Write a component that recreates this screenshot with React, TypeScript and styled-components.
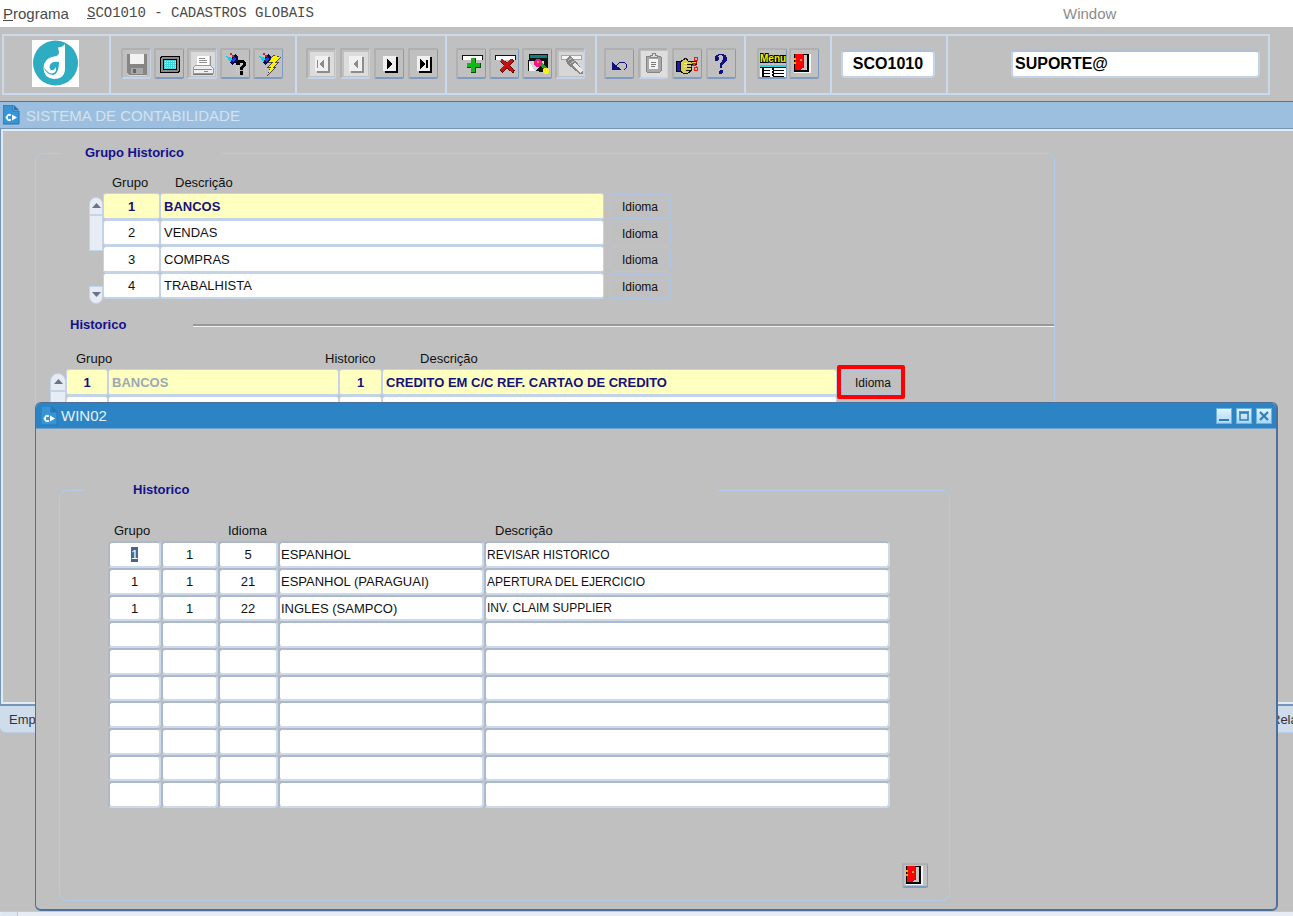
import React, { useEffect, useRef } from 'react';
import styled, { createGlobalStyle, css } from 'styled-components';

const GlobalStyle = createGlobalStyle`
  *, *::before, *::after { box-sizing: border-box; }
  body {
    margin: 0;
    background: #c0c0c0;
    color: #111;
    font-family: "Liberation Sans", Arial, sans-serif;
    font-size: 13px;
  }
  button, input { font: inherit; color: inherit; }
  ::selection { background: #4a6490; color: #fff; }
`;

const Screen = styled.div`
  position: relative;
  display: flex;
  flex-direction: column;
  height: 100vh;
  overflow: hidden;
`;

/* ---------- menu bar ---------- */

const MenuBar = styled.nav`
  display: grid;
  grid-template-columns: 84px 1fr 230px;
  align-items: center;
  flex: none;
  height: 27px;
  padding: 0 0 1px 3px;
  background: #fff;
  color: #4a4a4a;
`;

const MenuItem = styled.button<{ $mono?: boolean; $dim?: boolean }>`
  padding: 0;
  border: 0;
  background: none;
  text-align: left;
  font-size: 15px;
  ${(p) => p.$mono && css`font-family: "Liberation Mono", monospace; font-size: 14px;`}
  ${(p) => p.$dim && css`color: #8c8c8c;`}
`;

/* ---------- toolbar ---------- */

const Toolbar = styled.header`
  flex: none;
  padding: 7px 23px 6px 2px;
`;

const ToolbarFrame = styled.div`
  display: grid;
  grid-template-columns: 107px 186px 150px 150px 149px 86px 116px 1fr;
  height: 61px;
  border: 2px solid #cbd9ec;
`;

const ToolGroup = styled.div<{ $start: number; $gap?: number }>`
  display: flex;
  align-items: center;
  gap: ${(p) => p.$gap ?? 4}px;
  padding: 0 8px 2px ${(p) => p.$start}px;
  border-right: 2px solid #cbd9ec;
  &:last-child { border-right: 0; }
`;

const ToolButton = styled.button<{ $small?: boolean }>`
  display: flex;
  align-items: center;
  justify-content: center;
  flex: none;
  width: ${(p) => (p.$small ? 26 : 30)}px;
  height: ${(p) => (p.$small ? 25 : 31)}px;
  padding: 0;
  overflow: hidden;
  border: 2px solid;
  border-color: #b0b0b0 #7f9cc0 #7f9cc0 #b0b0b0;
  border-width: 2px 1px 2px 2px;
  border-radius: 2px;
  background: #c0c0c0;
  &:disabled { border-color: #b0b0b0 #c3d3e8 #c3d3e8 #b0b0b0; }
`;

const ToolField = styled.input<{ $fill?: boolean }>`
  width: ${(p) => (p.$fill ? '100%' : '94px')};
  height: 28px;
  padding: 0 2px;
  border: 2px solid #c3d3e8;
  border-top-color: #aebfd6;
  border-radius: 4px;
  background: #fff;
  color: #000;
  font-size: 16px;
  font-weight: bold;
  text-align: ${(p) => (p.$fill ? 'left' : 'center')};
`;

/* ---------- main window ---------- */

const Workspace = styled.main`
  display: flex;
  flex: 1;
  flex-direction: column;
  min-height: 0;
  padding-bottom: 178px;
`;

const TitleBar = styled.div<{ $active?: boolean }>`
  display: flex;
  align-items: center;
  flex: none;
  gap: 6px;
  height: 28px;
  padding-left: 3px;
  border-top: 1px solid #54759a;
  border-bottom: 1px solid #7396b9;
  background: #9dbfdf;
  color: #d3e2f1;
  font-size: 15px;
  ${(p) => p.$active && css`
    gap: 3px;
    height: 26px;
    padding: 0 4px 0 5px;
    border-top: 0;
    border-bottom-color: #6fa3cc;
    border-radius: 5px 5px 0 0;
    background: #2d84c4;
    color: #e6f2fb;
  `}
`;

const TitleText = styled.h1`
  flex: 1;
  margin: 0;
  font-size: 15px;
  font-weight: normal;
`;

const WindowBody = styled.section`
  flex: 1;
  min-height: 0;
  overflow: hidden;
  padding: 16px 31px 0;
  border-bottom: 2px solid #7396b9;
  border-left: 1px solid #7396b9;
  box-shadow: inset 2px 2px 0 #e3eaf2, inset 0 -2px 0 #e3eaf2;
`;

const TabStrip = styled.div`
  display: flex;
  flex: none;
  justify-content: space-between;
  height: 27px;
  border-bottom: 1px solid #bccce2;
  border-radius: 0 0 0 6px;
  background: #cfdcec;
`;

const Tab = styled.button<{ $clipped?: boolean }>`
  width: ${(p) => (p.$clipped ? 22 : 60)}px;
  padding: 0 0 0 ${(p) => (p.$clipped ? 0 : 9)}px;
  overflow: hidden;
  border: 0;
  background: none;
  color: #333;
  text-align: left;
`;

/* ---------- forms ---------- */

const Group = styled.fieldset<{ $width: number; $top: number }>`
  width: 100%;
  max-width: ${(p) => p.$width}px;
  height: 100%;
  min-width: 0;
  margin: 0 0 0 3px;
  padding: ${(p) => p.$top}px 0 0;
  border: 1px solid #b3caea;
  border-radius: 8px;
`;

const GroupTitle = styled.legend<{ $width: number; $indent: number }>`
  width: ${(p) => p.$width}px;
  height: 16px;
  margin-left: 24px;
  padding: 0 0 0 ${(p) => p.$indent}px;
  color: #14108c;
  font-weight: bold;
  line-height: 16px;
`;

const SectionTitle = styled.h2`
  display: flex;
  align-items: center;
  margin: 13px 0 17px 34px;
  color: #14108c;
  font-size: 13px;
  line-height: 16px;
  span { width: 123px; }
  &::after {
    content: "";
    flex: 1;
    height: 3px;
    border-top: 2px solid #999;
    border-bottom: 1px solid #f2f2f2;
  }
`;

const GridArea = styled.div<{ $start: number }>`
  display: flex;
  align-items: flex-start;
  padding-left: ${(p) => p.$start}px;
`;

const Grid = styled.table<{ $width: number }>`
  width: ${(p) => p.$width}px;
  border-collapse: separate;
  border-spacing: 0;
  table-layout: fixed;
  td { padding: 0; vertical-align: top; }
`;

const Head = styled.th<{ $left?: number }>`
  height: 19px;
  padding: 0 0 0 ${(p) => p.$left ?? 0}px;
  font-weight: normal;
  line-height: 18px;
  text-align: left;
  vertical-align: top;
  white-space: nowrap;
`;

const Cell = styled.input<{ $center?: boolean; $current?: boolean; $dim?: boolean }>`
  display: block;
  width: 100%;
  height: 26px;
  padding: 0 3px;
  border: 1px solid #c3d3e8;
  border-width: 1px 1px 2px;
  border-radius: 3px;
  outline: 0;
  background: #fff;
  ${(p) => p.$center && css`text-align: center;`}
  ${(p) => p.$current && css`background: #ffffc0; color: #14107c; font-weight: bold;`}
  ${(p) => p.$dim && css`color: #9aa9b4;`}
  tr:nth-child(odd) & { height: 27px; }
`;

const SunkenCell = styled.input<{ $center?: boolean; $compact?: boolean }>`
  display: block;
  width: 100%;
  height: 27px;
  padding: 0 1px;
  border: 2px solid;
  border-color: #adb8c9 #ccdaec #ccdaec #adb8c9;
  border-radius: 4px;
  outline: 0;
  background: #fff;
  font-size: ${(p) => (p.$compact ? 12 : 13)}px;
  text-align: ${(p) => (p.$center ? 'center' : 'left')};
  tr:nth-child(3n) & { height: 26px; }
`;

const IdiomaButton = styled.button`
  display: block;
  width: 62px;
  height: 25px;
  margin: 1px 0 0 5px;
  padding: 0;
  border: 1px solid #b0c6e6;
  border-radius: 3px;
  background: #c0c0c0;
  color: #111;
  font-size: 12px;
`;

const MarkedCell = styled.td`
  position: relative;
  &::after {
    content: "";
    position: absolute;
    top: -4px;
    left: 0;
    width: 68px;
    height: 34px;
    border: 4px solid #f00;
    border-radius: 2px;
    pointer-events: none;
  }
`;

/* ---------- scroll bars ---------- */

const ScrollTrack = styled.div<{ $width: number }>`
  display: flex;
  flex: none;
  flex-direction: column;
  width: ${(p) => p.$width}px;
  height: 107px;
  margin-top: 23px;
`;

const ScrollArrow = styled.button<{ $down?: boolean }>`
  display: flex;
  align-items: center;
  justify-content: center;
  height: 18px;
  margin-top: ${(p) => (p.$down ? 'auto' : '0')};
  padding: 0;
  border: 1px solid #c3d3e8;
  border-radius: ${(p) => (p.$down ? '0 0 8px 8px' : '8px 8px 0 0')};
  background: #e6ebf4;
`;

const ScrollThumb = styled.div`
  height: 36px;
  border: 1px solid #c3d3e8;
  background: #e8edf5;
`;

/* ---------- dialog ---------- */

const Dialog = styled.section`
  position: absolute;
  top: 402px;
  right: 15px;
  bottom: 5px;
  left: 35px;
  display: flex;
  flex-direction: column;
  border: 1px solid #4f6f9b;
  border-right-width: 2px;
  border-bottom-width: 2px;
  border-radius: 6px;
  background: #c0c0c0;
`;

const DialogBody = styled.div`
  flex: 1;
  padding: 53px 20px 8px;
`;

const DialogFoot = styled.div`
  display: flex;
  justify-content: flex-end;
  padding: 55px 21px 0 0;
`;

const WindowButton = styled.button`
  display: flex;
  width: 16px;
  height: 16px;
  margin-left: 1px;
  padding: 0;
  border: 1px solid #6db2e0;
  background: linear-gradient(#e2f3fd, #aed7f2);
`;

const BottomBar = styled.footer`
  display: flex;
  flex: none;
  height: 5px;
  border-top: 1px solid #b9cbe3;
  background: #e8edf5;
`;

const BottomArrow = styled.button`
  width: 18px;
  padding: 0;
  border: 0;
  border-right: 1px solid #b9cbe3;
  border-radius: 5px 0 0 0;
  background: #dfe7f2;
`;

/* ---------- drawings ---------- */

const Icon = ({ children, size = 26 }: { children: React.ReactNode; size?: number }) => (
  <svg width={size} height={size} viewBox={`0 0 ${size} ${size}`} shapeRendering="crispEdges" aria-hidden="true">
    {children}
  </svg>
);

const Logo = () => (
  <svg width="47" height="47" viewBox="0 0 47 47" role="img" aria-label="Logo">
    <rect width="47" height="47" fill="#fff" />
    <circle cx="23.5" cy="23" r="22.5" fill="#2eacc1" />
    <path d="M26 7.500Q31 7 33 4V28Q33 39 22 39Q11.500 38 11.500 28Q12 18 22 16.500Q27 16 27 12Z" fill="#fff" />
    <path d="M11.500 27Q14 34 21 35Q27 34 27 22Q18 21 17.500 27Q18 31 21.500 30Q23.500 29 23 27Q25.500 30 22.500 32.500Q18 35 14.500 30.500Z" fill="#2eacc1" />
  </svg>
);

const FormIcon = () => (
  <svg width="17" height="20" viewBox="0 0 17 20" aria-hidden="true">
    <path d="M0 0H10V6H16V19H0Z" fill="#3795d6" stroke="#2277b5" />
    <path d="M11 0L16 5H11Z" fill="#2277b5" />
    <path d="M9 9.500L14 12.500L9 15.500Z" fill="#fff" />
    <path d="M7 9.500Q4 9.500 4 12.500Q4 15.500 7 15.500M2.500 12.500H4M7 9V11M7 14V16" fill="none" stroke="#fff" strokeWidth="1.600" />
  </svg>
);

const Torch = () => (
  <g>
    <path d="M3 5L9 7L12 3L15 6L15 10L9 14Z" fill="#0b0b4a" />
    <path d="M3 5L9 7L8 12Z" fill="#00d8f0" />
    <path d="M9 8L12 5L13 9L10 11Z" fill="#1b3ff0" />
    <path d="M7 2H9V4H7ZM9 4H11V6H9Z" fill="#d02030" />
  </g>
);

const SaveIcon = () => (
  <Icon>
    <path d="M3 3H23V24H5L3 22Z" fill="#858585" />
    <rect x="6" y="3" width="14" height="10" fill="#f2f2f2" />
    <rect x="7" y="17" width="12" height="6" fill="#a8a8a8" />
    <rect x="9" y="18" width="3" height="4" fill="#666" />
    <path d="M5 24H23V25H5Z" fill="#d8d8d8" />
  </Icon>
);

const ScreenIcon = () => (
  <Icon>
    <rect x="3" y="5" width="20" height="17" rx="2" fill="#000" />
    <rect x="4" y="6" width="18" height="15" rx="2" fill="#8a8a8a" />
    <rect x="6" y="8" width="14" height="11" fill="#000" />
    <rect x="7" y="9" width="12" height="9" fill="#3fd6dc" />
    <path d="M8 10H19M8 12H19M8 14H19M8 16H19" stroke="#b9f4f4" strokeDasharray="1 1" />
  </Icon>
);

const PrintIcon = () => (
  <Icon>
    <rect x="1" y="1" width="24" height="24" fill="#dadada" />
    <path d="M7 5H19V14H7Z" fill="#fff" />
    <path d="M9 7H15M9 9H17M9 11H17M7 14H20V5" stroke="#909090" fill="none" />
    <path d="M3 17L6 14H20L23 17V22H3Z" fill="#efefef" stroke="#999" />
    <path d="M4 18H22M14 20H18" stroke="#8a8a8a" strokeWidth="1" />
    <path d="M3 23H23" stroke="#777" />
  </Icon>
);

const TorchQueryIcon = () => (
  <Icon>
    <path d="M13 12H25M13 14H25M13 16H25M13 18H25M13 20H25M13 22H25" stroke="#f0e820" strokeDasharray="1 1" />
    <Torch />
    <path d="M13 14V11L15 9H20L23 11V15L20 17V19H17V16L20 13V12H17V14Z" fill="#000" />
    <rect x="17" y="20" width="3" height="4" fill="#000" />
  </Icon>
);

const TorchRunIcon = () => (
  <Icon>
    <Torch />
    <path d="M17 4L25 6L20 11H24L18 16H20L11 25L14 17H11L15 12H12Z" fill="#444" />
    <path d="M17 5L24 6L18 12H22L16 17H18L12 23L15 16H12L17 11H13Z" fill="#fff200" />
  </Icon>
);

const NavIcon = ({ kind, dim }: { kind: 'first' | 'prev' | 'next' | 'last'; dim?: boolean }) => {
  const ink = dim ? '#8c8c8c' : '#000';
  return (
    <Icon>
      {dim && <rect x="1" y="1" width="24" height="24" fill="#dcdcdc" />}
      <path d="M8 21H20V6" stroke={ink} strokeWidth="2" fill="none" />
      <rect x="6" y="5" width="13" height="15" fill="#f0f0f0" />
      {kind === 'first' && <path d="M8 9H9V17H8ZM15 8V18L10 13Z" fill={ink} />}
      {kind === 'prev' && <path d="M15 8V18L10 13Z" fill={ink} />}
      {kind === 'next' && <path d="M10 8V18L16 13Z" fill={ink} />}
      {kind === 'last' && <path d="M9 8V18L14 13ZM15 9H17V17H15Z" fill={ink} />}
    </Icon>
  );
};

const InsertIcon = () => (
  <Icon>
    <rect x="3" y="4" width="20" height="5" fill="#fff" />
    <path d="M3 9V4H23V9" stroke="#111" fill="none" />
    <path d="M12 7H17V12H22V17H17V22H12V17H8V12H12Z" fill="#064a06" />
    <path d="M12 7H16V12H21V16H16V21H12V16H8V12H12Z" fill="#14b814" />
  </Icon>
);

const DeleteIcon = () => (
  <Icon>
    <rect x="3" y="4" width="20" height="5" fill="#fff" />
    <path d="M3 9V4H23V9" stroke="#111" fill="none" />
    <path d="M9 9L22 21M21 9L9 21" stroke="#5c0000" strokeWidth="4" />
    <path d="M9 9L21 20M20 9L9 20" stroke="#c80f14" strokeWidth="3" />
  </Icon>
);

const FindRecordIcon = () => (
  <Icon>
    <path d="M4 3H23V20H3V9H4Z" fill="#111" />
    <path d="M5 4H22V7H5Z" fill="#0a8080" />
    <path d="M4 10H19V20H4Z" fill="#d5d5d5" />
    <path d="M4 10L10 20H4Z" fill="#fff" />
    <path d="M11 20L17 12L24 18L21 22Z" fill="#111" />
    <circle cx="13" cy="12" r="4" fill="#f0188a" />
    <path d="M15 14L18 12L22 17L19 19Z" fill="#12a812" />
    <circle cx="21" cy="20" r="3" fill="#f4f020" />
    <circle cx="13" cy="11" r="1" fill="#ff9b30" />
  </Icon>
);

const CancelQueryIcon = () => (
  <Icon>
    <rect x="1" y="1" width="25" height="24" fill="#d6d6d6" />
    <path d="M3 4H23V8H3Z" fill="#f4f4f4" stroke="#a5a5a5" />
    <path d="M8 8L12 5L17 9L25 20V23H22L9 13Z" fill="#848484" />
    <path d="M16 13L24 21" stroke="#ececec" strokeWidth="3" />
    <path d="M10 10L14 7M12 13L17 9" stroke="#b8b8b8" />
  </Icon>
);

const UndoIcon = () => (
  <Icon>
    <path d="M5 10V19H14L11 16L8 14Z" fill="#101080" />
    <path d="M9 15L13 11H17L19 13V17L17 19" fill="none" stroke="#101080" strokeWidth="1" />
  </Icon>
);

const ClipboardIcon = () => (
  <Icon>
    <rect x="0" y="0" width="26" height="26" fill="#dedede" />
    <rect x="5" y="5" width="15" height="16" rx="1" fill="#a9a9a9" stroke="#858585" />
    <rect x="8" y="8" width="9" height="10" fill="#f4f4f4" />
    <path d="M9 6V4H11V2H14V4H16V6Z" fill="#ddd" stroke="#858585" />
    <path d="M10 11H15M10 13H15M10 15H14" stroke="#777" />
  </Icon>
);

const HandIcon = () => (
  <Icon>
    <rect x="1" y="10" width="4" height="10" fill="#1616cc" stroke="#000" />
    <path d="M5 11L11 7L13 10H21V13H16V20L13 22H8L5 20Z" fill="#d9cf56" stroke="#111" />
    <path d="M12 13H18M12 16H17M11 19H16" stroke="#111" />
    <path d="M9 12H12M9 15H11" stroke="#fff38a" />
    <path d="M16 11L22 16M16 16L22 11" stroke="#f01c1c" />
    <circle cx="21" cy="8" r="2" fill="none" stroke="#f01c1c" strokeWidth="1" />
    <circle cx="21" cy="18" r="2" fill="none" stroke="#f01c1c" strokeWidth="1" />
  </Icon>
);

const HelpIcon = () => (
  <Icon>
    <path d="M6 9V7Q6 3 12 3Q18 3 18 8Q18 11 13 14V17H11V13Q14 10 14 7Q14 4 11 4Q8 4 10 7Q10 10 8 10Q6 10 6 9Z" fill="#101080" />
    <circle cx="12" cy="21" r="2" fill="#101080" />
  </Icon>
);

const MenuIcon = () => (
  <Icon>
    <text x="0" y="11" fill="#f6f000" stroke="#000" strokeWidth="2" paintOrder="stroke" fontFamily="Liberation Sans" fontWeight="bold" fontSize="10">Menu</text>
    <rect x="0" y="14" width="26" height="2" fill="#20d8e0" />
    <rect x="0" y="16" width="26" height="10" fill="#fff" />
    <path d="M0 16H26M2 19H10M13 19H24M2 22H10M13 22H24M2 25H10M13 25H24" stroke="#000" />
    <path d="M2 18H4M12 18H14M2 21H4M12 21H14M2 24H4M12 24H14" stroke="#000" strokeWidth="2" />
  </Icon>
);

const DoorDrawing = () => (
  <g>
    <rect x="1" y="1" width="17" height="19" fill="#f4f4f4" />
    <rect x="1" y="1" width="15" height="18" fill="#000" />
    <path d="M10 2H14V17H7L10 15Z" fill="#c6c6c6" />
    <path d="M2 1H10V15L7 17H2Z" fill="#f00" />
    <path d="M10 2V15H11V2Z" fill="#444" />
    <path d="M1 6H3M1 10H3M7 7H9" stroke="#e0b020" strokeWidth="2" />
  </g>
);

const DoorIcon = () => (
  <Icon>
    <g transform="translate(1 2)"><DoorDrawing /></g>
  </Icon>
);

const SmallDoorIcon = () => (
  <Icon size={22}><DoorDrawing /></Icon>
);

const Triangle = ({ down }: { down?: boolean }) => (
  <svg width="9" height="6" viewBox="0 0 9 6" aria-hidden="true">
    <path d={down ? 'M0 0H9L4.500 5Z' : 'M0 5H9L4.500 0Z'} fill="#6d7288" />
  </svg>
);

const WindowGlyph = ({ kind }: { kind: 'min' | 'max' | 'close' }) => (
  <svg width="14" height="14" viewBox="0 0 14 14" aria-hidden="true">
    {kind === 'min' && <path d="M2 11H12" stroke="#2d7fba" strokeWidth="2" />}
    {kind === 'max' && <path d="M3 4H11V11H3ZM2 3H12" fill="none" stroke="#2d7fba" strokeWidth="1.500" />}
    {kind === 'close' && <path d="M3 3L11 11M11 3L3 11" stroke="#2d7fba" strokeWidth="2.200" />}
  </svg>
);

/* ---------- data ---------- */

const grupos = ['BANCOS', 'VENDAS', 'COMPRAS', 'TRABALHISTA'];

const idiomas = [
  ['1', '1', '5', 'ESPANHOL', 'REVISAR HISTORICO'],
  ['1', '1', '21', 'ESPANHOL (PARAGUAI)', 'APERTURA DEL EJERCICIO'],
  ['1', '1', '22', 'INGLES (SAMPCO)', 'INV. CLAIM SUPPLIER'],
  ...Array.from({ length: 7 }, () => ['', '', '', '', '']),
];

const Columns = ({ widths }: { widths: number[] }) => (
  <colgroup>
    {widths.map((w, i) => <col key={i} width={w} />)}
  </colgroup>
);

const Scroller = ({ width }: { width: number }) => (
  <ScrollTrack $width={width}>
    <ScrollArrow aria-label="Acima"><Triangle /></ScrollArrow>
    <ScrollThumb />
    <ScrollArrow $down aria-label="Abaixo"><Triangle down /></ScrollArrow>
  </ScrollTrack>
);

const IdiomaDialog = () => {
  const first = useRef<HTMLInputElement>(null);
  useEffect(() => {
    first.current?.focus();
    first.current?.select();
  }, []);
  return (
    <Dialog role="dialog" aria-label="WIN02">
      <TitleBar $active>
        <FormIcon />
        <TitleText as="h2">WIN02</TitleText>
        <WindowButton aria-label="Minimizar"><WindowGlyph kind="min" /></WindowButton>
        <WindowButton aria-label="Maximizar"><WindowGlyph kind="max" /></WindowButton>
        <WindowButton aria-label="Fechar"><WindowGlyph kind="close" /></WindowButton>
      </TitleBar>
      <DialogBody>
        <Group $width={891} $top={24}>
          <GroupTitle $width={634} $indent={49}>Historico</GroupTitle>
          <GridArea $start={48}>
            <Grid $width={782}>
              <Columns widths={[53, 57, 60, 206, 406]} />
              <thead>
                <tr>
                  <Head $left={6}>Grupo</Head>
                  <Head />
                  <Head $left={10}>Idioma</Head>
                  <Head />
                  <Head $left={11}>Descrição</Head>
                </tr>
              </thead>
              <tbody>
                {idiomas.map((row, r) => (
                  <tr key={r}>
                    {row.map((value, c) => (
                      <td key={c}>
                        <SunkenCell
                          ref={r === 0 && c === 0 ? first : undefined}
                          $center={c < 3}
                          $compact={c === 4}
                          defaultValue={value}
                          aria-label={['Grupo', 'Historico', 'Idioma', 'Nome do idioma', 'Descrição'][c]}
                        />
                      </td>
                    ))}
                  </tr>
                ))}
              </tbody>
            </Grid>
          </GridArea>
          <DialogFoot>
            <ToolButton $small aria-label="Sair"><SmallDoorIcon /></ToolButton>
          </DialogFoot>
        </Group>
      </DialogBody>
    </Dialog>
  );
};

export default function App() {
  return (
    <Screen>
      <GlobalStyle />
      <MenuBar>
        <MenuItem><u>P</u>rograma</MenuItem>
        <MenuItem $mono><u>S</u>CO1010 - CADASTROS GLOBAIS</MenuItem>
        <MenuItem $dim>Window</MenuItem>
      </MenuBar>

      <Toolbar>
        <ToolbarFrame>
          <ToolGroup $start={28}><Logo /></ToolGroup>
          <ToolGroup $start={10} $gap={3}>
            <ToolButton disabled aria-label="Salvar"><SaveIcon /></ToolButton>
            <ToolButton aria-label="Tela"><ScreenIcon /></ToolButton>
            <ToolButton disabled aria-label="Imprimir"><PrintIcon /></ToolButton>
            <ToolButton aria-label="Consultar"><TorchQueryIcon /></ToolButton>
            <ToolButton aria-label="Executar consulta"><TorchRunIcon /></ToolButton>
          </ToolGroup>
          <ToolGroup $start={9}>
            <ToolButton disabled aria-label="Primeiro"><NavIcon kind="first" dim /></ToolButton>
            <ToolButton disabled aria-label="Anterior"><NavIcon kind="prev" dim /></ToolButton>
            <ToolButton aria-label="Próximo"><NavIcon kind="next" /></ToolButton>
            <ToolButton aria-label="Último"><NavIcon kind="last" /></ToolButton>
          </ToolGroup>
          <ToolGroup $start={9} $gap={3}>
            <ToolButton aria-label="Incluir"><InsertIcon /></ToolButton>
            <ToolButton aria-label="Excluir"><DeleteIcon /></ToolButton>
            <ToolButton aria-label="Localizar"><FindRecordIcon /></ToolButton>
            <ToolButton disabled aria-label="Cancelar consulta"><CancelQueryIcon /></ToolButton>
          </ToolGroup>
          <ToolGroup $start={7}>
            <ToolButton aria-label="Desfazer"><UndoIcon /></ToolButton>
            <ToolButton disabled aria-label="Colar"><ClipboardIcon /></ToolButton>
            <ToolButton aria-label="Recortar"><HandIcon /></ToolButton>
            <ToolButton aria-label="Ajuda"><HelpIcon /></ToolButton>
          </ToolGroup>
          <ToolGroup $start={11} $gap={2}>
            <ToolButton aria-label="Menu"><MenuIcon /></ToolButton>
            <ToolButton aria-label="Sair"><DoorIcon /></ToolButton>
          </ToolGroup>
          <ToolGroup $start={9}>
            <ToolField aria-label="Programa" defaultValue="SCO1010" />
          </ToolGroup>
          <ToolGroup $start={63}>
            <ToolField $fill aria-label="Usuário" defaultValue="SUPORTE@" />
          </ToolGroup>
        </ToolbarFrame>
      </Toolbar>

      <Workspace>
        <TitleBar>
          <FormIcon />
          <TitleText>SISTEMA DE CONTABILIDADE</TitleText>
        </TitleBar>
        <WindowBody>
          <Group $width={1020} $top={13}>
            <GroupTitle $width={162} $indent={25}>Grupo Historico</GroupTitle>
            <GridArea $start={53}>
              <Scroller width={14} />
              <Grid $width={569}>
                <Columns widths={[57, 444, 68]} />
                <thead>
                  <tr>
                    <Head $left={9}>Grupo</Head>
                    <Head $left={15}>Descrição</Head>
                    <Head />
                  </tr>
                </thead>
                <tbody>
                  {grupos.map((nome, i) => (
                    <tr key={nome}>
                      <td><Cell $center $current={i === 0} defaultValue={i + 1} aria-label="Grupo" /></td>
                      <td><Cell $current={i === 0} defaultValue={nome} aria-label="Descrição" /></td>
                      <td><IdiomaButton>Idioma</IdiomaButton></td>
                    </tr>
                  ))}
                </tbody>
              </Grid>
            </GridArea>
            <SectionTitle><span>Historico</span></SectionTitle>
            <GridArea $start={14}>
              <Scroller width={16} />
              <Grid $width={839}>
                <Columns widths={[42, 231, 43, 455, 68]} />
                <thead>
                  <tr>
                    <Head $left={10}>Grupo</Head>
                    <Head $left={217} colSpan={2}>Historico</Head>
                    <Head $left={38}>Descrição</Head>
                    <Head />
                  </tr>
                </thead>
                <tbody>
                  <tr>
                    <td><Cell $center $current defaultValue="1" aria-label="Grupo" /></td>
                    <td><Cell $current $dim defaultValue="BANCOS" aria-label="Nome do grupo" /></td>
                    <td><Cell $center $current defaultValue="1" aria-label="Historico" /></td>
                    <td><Cell $current defaultValue="CREDITO EM C/C REF. CARTAO DE CREDITO" aria-label="Descrição" /></td>
                    <MarkedCell><IdiomaButton>Idioma</IdiomaButton></MarkedCell>
                  </tr>
                  <tr>
                    <td><Cell aria-label="Grupo" /></td>
                    <td><Cell aria-label="Nome do grupo" /></td>
                    <td><Cell aria-label="Historico" /></td>
                    <td><Cell aria-label="Descrição" /></td>
                    <td />
                  </tr>
                </tbody>
              </Grid>
            </GridArea>
          </Group>
        </WindowBody>
        <TabStrip>
          <Tab>Emp</Tab>
          <Tab $clipped>Rela</Tab>
        </TabStrip>
      </Workspace>

      <BottomBar>
        <BottomArrow aria-label="Rolar para a esquerda" />
      </BottomBar>

      <IdiomaDialog />
    </Screen>
  );
}
